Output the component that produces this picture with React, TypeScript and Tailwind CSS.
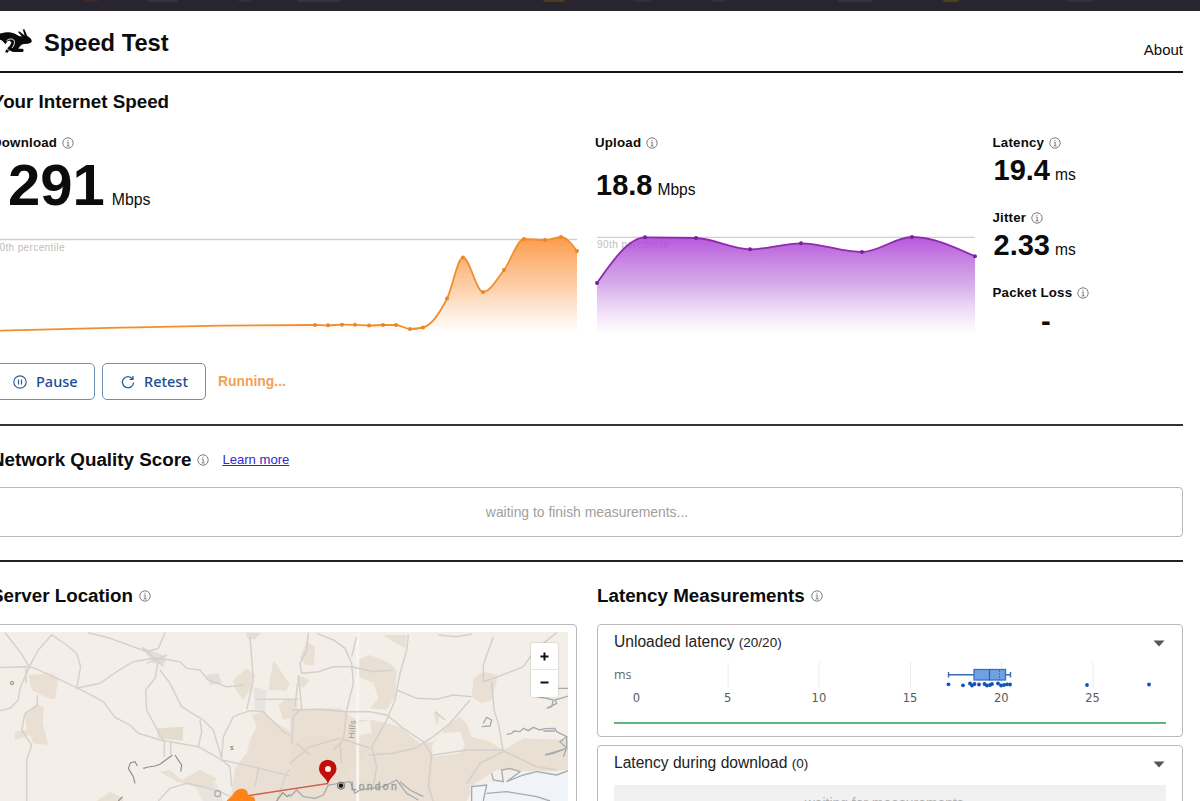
import React from "react";

type Pt = [number, number];

const download: Pt[] = [
  [-12, 331], [120, 327.7], [220, 325.7], [315, 325], [328, 325.3], [342, 324.7], [355, 324.8],
  [369, 325.5], [383, 325], [396, 325], [410, 329], [423, 327.5], [447, 298.5],
  [463, 257.5], [483, 292], [504, 270], [524, 239], [545, 240], [561, 237], [577, 251],
];
const upload: Pt[] = [
  [597, 283], [645, 237.3], [696, 238], [750, 249.3], [801, 243.3], [862, 252], [912, 237], [975, 256.3],
];

function monotone(p: Pt[]): string {
  const n = p.length;
  const s = p.slice(1).map((q, i) => (q[1] - p[i][1]) / (q[0] - p[i][0]));
  const m = p.map((_, i) => {
    if (i === 0 || i === n - 1) return 0;
    if (s[i - 1] * s[i] <= 0) return 0;
    const h0 = p[i][0] - p[i - 1][0];
    const h1 = p[i + 1][0] - p[i][0];
    const avg = (s[i - 1] * h1 + s[i] * h0) / (h0 + h1);
    return Math.sign(avg) * Math.min(2 * Math.abs(s[i - 1]), 2 * Math.abs(s[i]), Math.abs(avg));
  });
  m[0] = (3 * s[0] - m[1]) / 2;
  m[n - 1] = (3 * s[n - 2] - m[n - 2]) / 2;
  let d = `M${p[0][0]},${p[0][1]}`;
  for (let i = 1; i < n; i++) {
    const h = (p[i][0] - p[i - 1][0]) / 3;
    d += `C${p[i - 1][0] + h},${p[i - 1][1] + m[i - 1] * h} ${p[i][0] - h},${p[i][1] - m[i] * h} ${p[i][0]},${p[i][1]}`;
  }
  return d;
}

function Info({ className = "ml-[5px]" }: { className?: string }) {
  return (
    <svg className={`shrink-0 ${className}`} width="12" height="12" viewBox="0 0 12 12" fill="none" stroke="#6e6e6e" strokeWidth="0.9">
      <circle cx="6" cy="6" r="5.2" />
      <path d="M4.8 5.2H6.2V8.8M4.6 8.9H7.6M6 2.8V3.9" />
    </svg>
  );
}

function Label({ text }: { text: string }) {
  return (
    <div className="flex h-[21px] items-center text-[13.3px] font-bold tracking-[0.2px] whitespace-nowrap">
      {text}
      <Info />
    </div>
  );
}

function Heading({ text, info = true }: { text: string; info?: boolean }) {
  return (
    <h2 className="flex h-[26px] items-center text-[18.8px] font-bold whitespace-nowrap">
      {text}
      {info && <Info className="ml-[6px]" />}
    </h2>
  );
}

function Metric({ value, unit }: { value: string; unit: string }) {
  return (
    <div className="flex h-[34px] items-baseline pl-px leading-[34px]">
      <span className="text-[29px] font-bold">{value}</span>
      <span className="ml-[5px] text-[15.6px]">{unit}</span>
    </div>
  );
}

function Rabbit() {
  return (
    <svg width="46" height="26" viewBox="-14 28 46 26" className="shrink-0">
      <g fill="#0a0a0a">
        <path d="M-12 37C-6 35 4 32.200 9 32.300C13 32.500 16 34.500 19 36L22 36.500L17.800 31.800L19.600 31.600L24.600 35.600L22.800 29.400L24.400 29.300L27.200 36C29.500 37 31.700 39 31.800 41.200C31.300 43 28 44 24.500 44C21.500 44 20.200 45.500 18.300 48.800H22.600C24 49.200 23.800 51.800 22.600 52H13.200L9 50.200L7.200 48.200L10.200 45.300L11.400 42.300L9.300 40.600L7.200 41.500L5.600 44.300L2 40.500L-2 38.800Z" />
        <path d="M6.300 49.300L9 50.400L7.800 52.800L5.200 52.300Z" />
      </g>
      <path d="M6.500 40.800C8.500 38.600 12 38.300 13.800 40C15.300 42.200 14.200 45.500 12 48" stroke="#fff" strokeWidth="0.9" fill="none" />
    </svg>
  );
}

function DownloadChart() {
  const d = monotone(download);
  return (
    <svg width="591" height="103" viewBox="-12 232 591 103" className="mt-4 -ml-[4px] block max-w-none overflow-visible">
      <defs>
        <linearGradient id="dl" x1="0" x2="0" y1="237" y2="334" gradientUnits="userSpaceOnUse">
          <stop offset="0" stopColor="#fb9540" stopOpacity="0.95" />
          <stop offset="0.5" stopColor="#fca55c" stopOpacity="0.55" />
          <stop offset="1" stopColor="#fdb27a" stopOpacity="0" />
        </linearGradient>
      </defs>
      <path d="M-12 239.5H577" stroke="#d0d0d0" strokeWidth="1.3" />
      <text x="-6.5" y="250.500" fontSize="10" fill="#bdbdbd" textLength="71">90th percentile</text>
      <path d={`${d}V334H-12Z`} fill="url(#dl)" />
      <path d={d} fill="none" stroke="#ee902f" strokeWidth="1.8" />
      {download.slice(3).map(([x, y], i) => (
        <circle key={i} cx={x} cy={y} r="2" fill="#ea8628" />
      ))}
    </svg>
  );
}

function UploadChart() {
  const d = monotone(upload);
  return (
    <svg width="382" height="103" viewBox="595 232 382 103" className="mt-[30px] block max-w-none overflow-visible">
      <defs>
        <linearGradient id="ul" x1="0" x2="0" y1="237" y2="334" gradientUnits="userSpaceOnUse">
          <stop offset="0" stopColor="#b045d8" stopOpacity="0.9" />
          <stop offset="0.5" stopColor="#b366d6" stopOpacity="0.53" />
          <stop offset="1" stopColor="#cc8ce4" stopOpacity="0" />
        </linearGradient>
      </defs>
      <path d="M597 237.3H975" stroke="#d0d0d0" strokeWidth="1.3" />
      <text x="597" y="248.3" fontSize="10" fill="#bdbdbd" textLength="72">90th percentile</text>
      <path d={`${d}V334H597Z`} fill="url(#ul)" />
      <path d={d} fill="none" stroke="#8e2bae" strokeWidth="1.8" />
      {upload.map(([x, y], i) => (
        <circle key={i} cx={x} cy={y} r="2" fill="#7a1f9c" />
      ))}
    </svg>
  );
}

function MapView() {
  return (
    <svg width="572" height="176" viewBox="-4 632 572 176" className="block max-w-none">
      <rect x="-4" y="632" width="572" height="176" fill="#f3efe8" />
      <g transform="translate(0 620) scale(.33333)">
        <g fill="#e9e0d3">
          <path d="M85 165L155 160L175 175L165 238L145 235L95 210Z" />
          <path d="M75 280L110 252L132 260L128 310L145 375L100 370L90 345L45 360V335L80 330Z" />
          <path d="M700 180L740 145L765 165L755 200L730 240L705 205Z" />
          <path d="M805 210L820 120L868 190L860 212Z" />
          <path d="M835 255L860 235L890 240L895 290L850 300Z" />
          <path d="M755 285L790 275L830 310L900 350V545H690L705 445L740 400L750 360L770 320Z" />
          <path d="M480 455L510 450L545 480L600 450L650 475L640 500L585 500L530 485Z" />
          <path d="M290 543L330 515L370 535V543Z" />
          <path d="M470 325L550 320L548 362L475 355Z" fill="#e3dccf" />
        </g>
        <g fill="#e2ded8">
          <path d="M425 80L465 95L500 110L490 135L460 130Z" />
          <path d="M620 165L655 160L665 190L630 195Z" />
          <path d="M735 38H785L765 58H745Z" />
          <path d="M760 200L800 210L795 280L765 270Z" opacity=".7" />
          <path d="M585 500L650 490L670 543H610Z" opacity=".7" />
        </g>
        <g fill="none" stroke="#d6d1cd" strokeWidth="4.500">
          <path d="M-12 143L75 140L100 143L160 170L235 205L310 245L345 292L390 315L415 340L480 360L595 380L665 420L750 438L900 475" />
          <path d="M15 38L60 95L88 140L115 90L155 45L200 75L230 100L242 140L230 205L300 190L350 155L400 125L460 115L510 120L540 125L560 145L600 150L625 180L680 200L735 195" />
          <path d="M265 38L330 55L440 95L475 85L495 38" />
          <path d="M475 120L465 175L437 210L440 270L480 345L493 365V410M512 365V405" />
          <path d="M480 150L510 190L545 260L610 300L640 330L665 415L670 350L700 290L750 272L790 275L850 335L878 350L885 260L895 170" />
          <path d="M600 300L605 335L595 380M750 50L760 180L740 270M770 238H895" />
          <path d="M425 82L490 138M440 130L500 105" />
          <path d="M88 140L60 205L55 240L30 265L-12 275M78 145V190M112 225V255L75 280L65 330L95 375L80 420L80 543" />
          <path d="M475 543L510 505L560 490L610 500L660 515L720 543M665 420L690 440L695 500" />
          <path d="M775 445L765 500M900 420L860 460L830 543" />
        </g>
        <g fill="none" stroke="#8f8f8f" strokeWidth="3.500">
          <path d="M405 490L400 470L385 445L392 428L405 425L412 438M430 445L445 441L465 438L480 433L500 418L517 406M525 405L538 425L545 435L542 455M355 543L368 530M830 543L848 518L862 530L875 518L882 532L900 515" />
          <circle cx="653" cy="521" r="9" stroke="#aaa" />
        </g>
        <text x="29" y="194" fontSize="22" fontWeight="bold" fill="#888">o</text>
        <text x="690" y="389" fontSize="20" fontWeight="bold" fill="#888">s</text>
      </g>
      <g transform="translate(290 620) scale(.33333)">
        <g fill="#e9e0d3">
          <path d="M50 65L75 80L72 135H45L30 110Z" />
          <path d="M200 120L240 105L300 130L320 150L315 230L290 270L240 265L265 235L250 190L195 165Z" />
          <path d="M0 240L25 270H60L90 265H150L200 300L250 300L290 310L330 320L390 370L430 365L480 310L510 290L530 310L545 350L600 365L640 390L700 355L835 360V450L740 455L620 450L555 490L530 543H0Z" />
          <path d="M550 175L580 155L625 165L605 240L575 250L545 230Z" />
          <path d="M280 45L350 45L345 85L300 60ZM430 275L450 285L440 320ZM25 165L60 180L40 205L20 190Z" />
        </g>
        <path d="M425 380L450 340L510 335L525 375L510 400L430 410ZM195 310L240 300L245 340L210 345Z" fill="#f3efe8" />
        <path d="M0 370Q80 330 160 365L235 390L150 480L0 500Z" fill="#e6dac8" opacity=".4" />
        <path d="M545 543L540 500L590 490L650 485L690 455L740 455L800 460L835 450V564H545Z" fill="#f0f4f8" />
        <path d="M203 38V543" stroke="#f8f5ef" strokeWidth="9" />
        <g fill="none" stroke="#d4cfcc" strokeWidth="4.500">
          <path d="M55 38L50 90L30 130L35 160L85 155L130 140L185 140L250 155L310 150" />
          <path d="M80 40L130 60L165 85L185 130L190 190L170 270L160 360L130 390" />
          <path d="M200 50L185 110M355 45L350 90L330 160L315 240L290 300L245 380L260 440L250 500" />
          <path d="M5 270L90 268L170 275L240 275L290 285L340 325L400 365L425 405L415 500L430 543" />
          <path d="M320 210L380 235L440 238L490 225L545 230M235 405L310 400L375 385L430 350L480 310L540 240" />
          <path d="M445 45L500 50L545 42M610 50L580 135V185L625 170L700 140L735 90L800 38" />
          <path d="M430 405L530 390L635 390L740 440L800 450M605 185L612 270L625 310L640 395L570 430L530 490" />
          <path d="M0 430L60 380L150 355L240 385M435 275L465 300M20 370L60 405M130 390L150 370L155 430" />
          <path d="M25 165L35 265L10 290L5 370" />
        </g>
        <g fill="none" stroke="#a5abb0" strokeWidth="4">
          <path d="M650 343L665 340L672 333L690 335L700 325L715 332L730 322L750 330L765 326L795 325L800 335L830 350L810 365L830 385L765 405L790 400L830 385M760 333H795M830 350V385L820 410M740 230L770 235L790 240L785 260L770 265L800 250L795 240L835 228M805 205L835 205" />
          <path d="M605 460L610 480L640 485L635 450L660 445L690 455L670 470L650 485L700 465L740 455L800 465L835 452M545 543V500L590 495L580 543M590 520L650 515L740 530L780 543" />
          <path d="M580 310L590 292L605 300L600 318L575 320" />
          <path d="M0 530L20 510L40 530L75 535L100 525L115 495L180 485L195 520L210 510L280 500L320 480L350 520L385 540M330 485L360 510L400 530" />
        </g>
        <text x="0" y="0" transform="translate(193 357) rotate(-85)" fontSize="26" fill="#999" textLength="56">Hills</text>
        <circle cx="153" cy="497" r="11" fill="#b5b5b0" stroke="#777" strokeWidth="3" />
        <circle cx="153" cy="497" r="6.500" fill="#111" />
        <text x="182" y="509" fontSize="31" fill="#999" stroke="#999" textLength="138">London</text>
      </g>
      <path d="M240 797L328 783.5" stroke="#d4604c" strokeWidth="1.5" />
      <path d="M224 808C225 800 229 799 232 796C235 789 242 787 246 790C248 791 247 794 249 796L254 797C256 802 255 805 252 808Z" fill="#ff8316" />
      <path d="M328 784C326 777 319 775 319 768.5A8.7 8.7 0 0 1 336.500 768.5C336.500 775 330 777 328 784Z" fill="#c40d0d" />
      <circle cx="328" cy="769" r="3" fill="#fff0e6" />
    </svg>
  );
}

function Caret() {
  return (
    <svg width="12" height="7" viewBox="0 0 12 7" className="mt-[2px] mr-[1px]">
      <path d="M0.500 0.500H11.500L6 6.500Z" fill="#555" />
    </svg>
  );
}

const samples: Pt[] = [
  [948.500, 684.300], [963, 685.300], [970, 683.500], [972, 685.500], [974.500, 684], [979, 684.500], [984.500, 684],
  [987, 685.500], [990, 685], [992, 684], [998, 683.500], [1001, 685.500], [1004, 685], [1007, 684.300],
  [1010, 684.500], [1087, 685], [1149, 684.500],
];

function LatencyPlot() {
  return (
    <svg width="552" height="50" viewBox="614 659 552 50" className="block font-['DejaVu_Sans',sans-serif]">
      {[728, 819, 910.500, 1001.500, 1093].map((x) => (
        <path key={x} d={`M${x} 662V688`} stroke="#ececec" />
      ))}
      <text x="614" y="679" fontSize="12.500" fill="#666" className="font-['Open_Sans',sans-serif]">ms</text>
      {[0, 5, 10, 15, 20, 25].map((v, i) => (
        <text key={v} x={636.500 + i * 91.200} y="702.300" fontSize="11.500" fill="#5a5a5a" textAnchor="middle">{v}</text>
      ))}
      <path d="M948.500 674.800H1010.500M948.500 672V677.500M1010.500 672V677.500" stroke="#3c69b0" strokeWidth="1.400" />
      <rect x="974" y="669.500" width="31.500" height="10.500" fill="#6fa1e4" stroke="#3a70c0" strokeWidth="1.300" />
      <path d="M989.500 669V680.500" stroke="#2d5fab" strokeWidth="1.200" />
      <path d="M999.500 670V680" stroke="#3a70c0" strokeWidth="1" strokeDasharray="2 1" />
      {samples.map(([x, y], i) => (
        <circle key={i} cx={x} cy={y} r="1.900" fill="#1153b8" />
      ))}
    </svg>
  );
}

function CardTitle({ text, count }: { text: string; count: string }) {
  return (
    <div className="flex h-[34px] items-center justify-between">
      <div className="text-[15.600px] whitespace-nowrap text-[#222]">
        {text} <span className="text-[13.500px]">{count}</span>
      </div>
      <Caret />
    </div>
  );
}

const specks = [
  "ml-[84px] w-[14px] bg-[#45242d]", "ml-[50px] w-[30px] bg-[#35333b]", "ml-[60px] w-[14px] bg-[#302e36]",
  "ml-[45px] w-[44px] bg-[#35333b]", "ml-[202px] w-[22px] bg-[#4c3a24]", "ml-[68px] w-[18px] bg-[#302e43]",
  "ml-[60px] w-[14px] bg-[#302e43]", "ml-[112px] w-[36px] bg-[#35333b]", "ml-[70px] w-[16px] bg-[#4c401c]",
  "ml-[108px] w-[26px] bg-[#33313a]",
];

export default function App() {
  return (
    <div className="h-[801px] w-[1200px] overflow-hidden bg-white font-['Liberation_Sans',Arial,sans-serif] text-[#0c0c0c]">
      <div className="flex h-[11px] items-start overflow-hidden bg-[#28252e]">
        {specks.map((c) => (
          <span key={c} className={`h-[2px] shrink-0 rounded-b ${c}`} />
        ))}
      </div>
      <div className="-ml-3 w-[1195px]">
        <header className="flex h-[62px] items-center justify-between border-b-2 border-[#151515]">
          <div className="flex items-center pt-[5px]">
            <div className="-mt-[5px] -ml-[2px]"><Rabbit /></div>
            <h1 className="ml-[12px] text-[23.700px] font-bold whitespace-nowrap">Speed Test</h1>
          </div>
          <a className="pt-[19px] text-[15px]">About</a>
        </header>

        <section className="h-[353px] border-b-2 border-[#333] pt-4">
          <div className="pl-[4px]"><Heading text="Your Internet Speed" info={false} /></div>
          <div className="mt-[17px] flex h-[203px]">
            <div className="w-[607px] shrink-0 pl-[4px]">
              <Label text="Download" />
              <div className="mt-[2px] flex h-[61px] items-baseline pl-[16px] leading-[60px]">
                <span className="text-[58px] font-bold">291</span>
                <span className="ml-[7px] text-[15.800px]">Mbps</span>
              </div>
              <DownloadChart />
            </div>
            <div className="w-[397px] shrink-0">
              <Label text="Upload" />
              <div className="mt-[15px]"><Metric value="18.8" unit="Mbps" /></div>
              <UploadChart />
            </div>
            <div className="pl-[0.500px]">
              <Label text="Latency" />
              <div className="mb-[20px]"><Metric value="19.4" unit="ms" /></div>
              <Label text="Jitter" />
              <div className="mb-[20px]"><Metric value="2.33" unit="ms" /></div>
              <Label text="Packet Loss" />
              <div className="flex h-[34px] justify-center pt-[5px] pl-[10px] text-[29px] leading-[26px] font-bold">-</div>
            </div>
          </div>
          <div className="mt-7 flex h-[37px] items-center font-['Noto_Sans','Open_Sans',sans-serif] text-[14.500px] font-medium text-[#1b4d92]">
            <button className="flex h-[37px] w-[107px] items-center rounded-[5px] border-[1.500px] border-[#6c8fb4] pl-[24px]">
              <svg width="14" height="14" viewBox="0 0 14 14" fill="none" stroke="#2f5f91" strokeWidth="1.200">
                <circle cx="7" cy="7" r="6.200" />
                <path d="M5.500 4.500V9.500M8.500 4.500V9.500" />
              </svg>
              <span className="ml-[9px]">Pause</span>
            </button>
            <button className="ml-[7px] flex h-[37px] w-[104px] items-center rounded-[5px] border-[1.500px] border-[#6c8fb4] pl-[18px]">
              <svg width="14" height="14" viewBox="0 0 14 14" fill="none" stroke="#2f5f91" strokeWidth="1.300">
                <path d="M11.500 3.800A5.600 5.600 0 1 0 12.600 7.500M12 1V4.300H8.700" />
              </svg>
              <span className="ml-[9px]">Retest</span>
            </button>
            <span className="ml-3 font-['Liberation_Sans',Arial,sans-serif] text-[13.900px] font-bold text-[#f3a058]">Running...</span>
          </div>
        </section>

        <section className="h-[136px] border-b-2 border-[#222] pt-[21px]">
          <div className="flex items-center pl-[3px]">
            <Heading text="Network Quality Score" />
            <a className="ml-[13px] text-[13.100px] text-[#3229c8] underline">Learn more</a>
          </div>
          <div className="mt-[14px] flex h-[50px] items-center justify-center rounded-[4px] border-[1.500px] border-[#b9b9b9] pl-[3px] text-[13.900px] text-[#a0a0a0]">
            <span>waiting to finish measurements...</span>
          </div>
        </section>

        <section className="flex gap-5 pt-[21px]">
          <div className="w-[589px] shrink-0">
            <div className="pl-[3px]"><Heading text="Server Location" /></div>
            <div className="relative mt-[15px] h-[184px] overflow-hidden rounded-[4px] border-[1.500px] border-[#b9b9b9] p-[7px]">
              <MapView />
              <div className="absolute top-[18px] right-[18px] flex h-[54px] w-[27px] flex-col rounded-[2px] bg-white shadow-[0_0_2px_rgba(0,0,0,0.25)]">
                <button className="flex h-[27px] items-center justify-center border-b border-[#e4e4e4]" aria-label="Zoom in">
                  <svg width="9" height="9" viewBox="0 0 9 9" stroke="#111" strokeWidth="2"><path d="M0.500 4.500H8.500M4.500 0.500V8.500" /></svg>
                </button>
                <button className="flex h-[25px] items-center justify-center" aria-label="Zoom out">
                  <svg width="9" height="9" viewBox="0 0 9 9" stroke="#111" strokeWidth="2"><path d="M0.500 4.500H8.500" /></svg>
                </button>
              </div>
            </div>
          </div>
          <div className="w-[586px] shrink-0">
            <Heading text="Latency Measurements" />
            <div className="mt-[15px] h-[113px] rounded-[4px] border-[1.500px] border-[#b9b9b9] px-4">
              <CardTitle text="Unloaded latency" count="(20/20)" />
              <LatencyPlot />
              <div className="mt-[13px] h-[2px] bg-[#5cb97c]" />
            </div>
            <div className="mt-2 h-[113px] rounded-[4px] border-[1.500px] border-[#b9b9b9] px-4">
              <CardTitle text="Latency during download" count="(0)" />
              <div className="mt-[5px] flex h-[36px] items-center justify-center bg-[#f1f1f1] text-[13.900px] text-[#b0b0b0]">waiting for measurements...</div>
            </div>
          </div>
        </section>
      </div>
    </div>
  );
}
